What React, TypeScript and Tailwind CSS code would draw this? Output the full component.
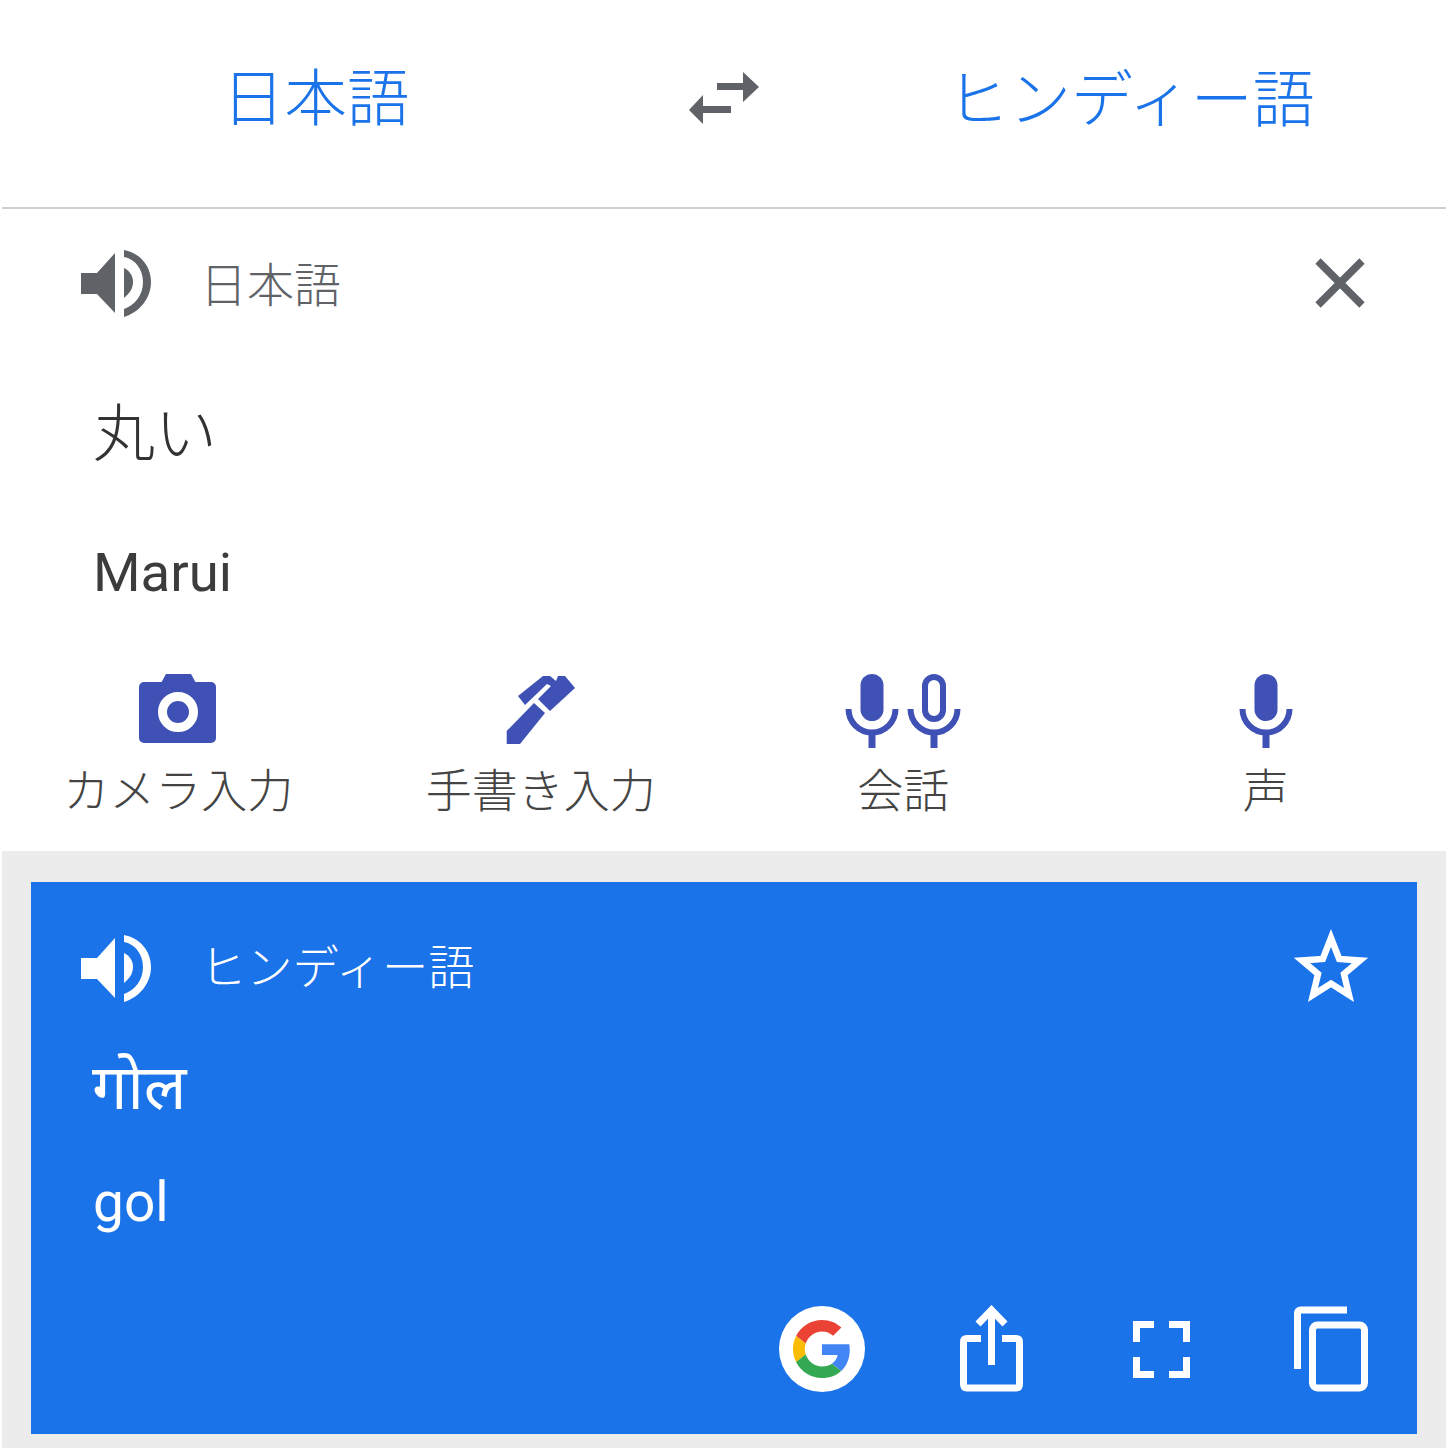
const cjk = "font-['Noto_Sans_CJK_JP','Noto_Sans',sans-serif]";

function Speaker({ color }: { color: string }) {
  return (
    <svg width="72" height="70" viewBox="0 0 72 70" fill={color} className="shrink-0">
      <path d="M1 25H17L35 5V65L17 46H1Z" />
      <path d="M44 20C50 23 53 28 53 34C53 40 50 45 44 50Z" />
      <path d="M44 2C60 5 71 18 71 34C71 50 60 64 44 69V61C55 57 63 47 63 34C63 21 55 11 44 9Z" />
    </svg>
  );
}

function Camera() {
  return (
    <svg width="78" height="70" viewBox="0 0 78 70">
      <path d="M22 9L27 0H52L57 9Z" fill="#3f51b5" />
      <rect x="0" y="8" width="77" height="61" rx="5" fill="#3f51b5" />
      <circle cx="39" cy="38" r="15.5" fill="none" stroke="#fff" strokeWidth="9" />
    </svg>
  );
}

function Pen() {
  return (
    <svg width="72" height="72" viewBox="0 0 72 72" fill="#3f51b5">
      <path d="M1.7 57V70H15L40 39L29 29Z" />
      <path d="M13 22L38 2H45L51 7L53 2H60L70 14L45 37L33 25L46 12L42 10L20 31Z" />
    </svg>
  );
}

function Mic({ outline }: { outline?: boolean }) {
  return (
    <svg width="54" height="75" viewBox="0 0 54 75" fill="none" stroke="#3f51b5">
      {outline ? (
        <rect x="18" y="3" width="18" height="42" rx="9" strokeWidth="6" />
      ) : (
        <rect x="15.5" y="0" width="23" height="47" rx="11.5" fill="#3f51b5" stroke="none" />
      )}
      <path d="M3.5 35A23.5 23.5 0 0 0 50.5 35" strokeWidth="6" />
      <path d="M27 58V74" strokeWidth="7" />
    </svg>
  );
}

function Tool({ icon, label }: { icon: React.ReactNode; label: string }) {
  return (
    <div className="flex flex-col items-center">
      <div className="flex h-[75px] items-start gap-[8px]">{icon}</div>
      <div className={`mt-[8px] h-[60px] text-[46px] leading-[60px] font-light whitespace-nowrap text-[#444444] ${cjk}`}>{label}</div>
    </div>
  );
}

function GoogleG() {
  return (
    <div className="flex h-[86px] w-[86px] items-center justify-center rounded-full bg-white">
      <svg width="58" height="58" viewBox="0 0 48 48">
        <path fill="#EA4335" d="M24 9.5c3.54 0 6.71 1.22 9.21 3.6l6.85-6.85C35.9 2.38 30.47 0 24 0 14.62 0 6.51 5.38 2.56 13.22l7.98 6.19C12.43 13.72 17.74 9.5 24 9.5z" />
        <path fill="#4285F4" d="M46.98 24.55c0-1.57-.15-3.09-.38-4.55H24v9.02h12.94c-.58 2.96-2.26 5.48-4.78 7.18l7.73 6c4.51-4.18 7.09-10.36 7.09-17.65z" />
        <path fill="#FBBC05" d="M10.53 28.59c-.48-1.45-.76-2.99-.76-4.59s.27-3.14.76-4.59l-7.98-6.19C.92 16.46 0 20.12 0 24c0 3.88.92 7.54 2.56 10.78l7.97-6.19z" />
        <path fill="#34A853" d="M24 48c6.48 0 11.93-2.13 15.89-5.81l-7.73-6c-2.15 1.45-4.92 2.3-8.16 2.3-6.26 0-11.57-4.22-13.47-9.91l-7.98 6.19C6.51 42.62 14.62 48 24 48z" />
      </svg>
    </div>
  );
}

function Share() {
  return (
    <svg width="66" height="88" viewBox="0 0 66 88" fill="none" stroke="#fff" className="ml-[94px]">
      <path d="M22 33.5H8Q4.5 33.5 4.5 37V79Q4.5 83 8 83H57Q60.5 83 60.5 79V37Q60.5 33.5 57 33.5H43" strokeWidth="7" />
      <path d="M32.5 8V60" strokeWidth="7" />
      <path d="M19 19L32.5 5L46 19" strokeWidth="7" />
    </svg>
  );
}

function Fullscreen() {
  return (
    <svg width="57" height="57" viewBox="0 0 57 57" fill="none" stroke="#fff" strokeWidth="7" className="ml-[108px]">
      <path d="M3.5 21V3.5H21" />
      <path d="M36 3.5H53.5V21" />
      <path d="M3.5 36V53.5H21" />
      <path d="M36 53.5H53.5V36" />
    </svg>
  );
}

function Copy() {
  return (
    <svg width="78" height="88" viewBox="0 0 78 88" fill="none" stroke="#fff" strokeWidth="7" className="ml-[102px]">
      <path d="M5.5 64V9Q5.5 5 9 5H55" />
      <rect x="20.5" y="20" width="52" height="63" rx="5" />
    </svg>
  );
}

export default function App() {
  return (
    <div className={`h-[1448px] w-[1448px] overflow-hidden bg-white px-[2px] ${cjk}`}>
      <header className="flex h-[209px] items-center border-b-2 border-[#cfcfcf] pb-[12px] pl-[220px]">
        <span className={`mb-[6px] w-[467px] text-[62.5px] leading-none font-light text-[#1a73e8] ${cjk}`}>日本語</span>
        <svg width="70" height="52" viewBox="0 0 70 52" fill="#5f6368">
          <path d="M28 11H54V0L70 15L54 30V18H28Z" />
          <path d="M0 38L14 23V34H42V41H14V52Z" />
        </svg>
        <span className={`mb-[6px] ml-[188px] text-[62px] leading-none font-light whitespace-nowrap text-[#1a73e8] ${cjk}`}>ヒンディー語</span>
      </header>

      <section className="h-[642px] pt-[39px]">
        <div className="flex h-[70px] items-center pr-[78px] pl-[78px]">
          <Speaker color="#5f6368" />
          <span className={`mb-[4px] ml-[48px] text-[47px] leading-none font-light text-[#5f6368] ${cjk}`}>日本語</span>
          <svg width="56" height="56" viewBox="0 0 56 56" fill="none" stroke="#5f6368" strokeWidth="7.5" className="ml-auto">
            <path d="M6 6L50 50M50 6L6 50" />
          </svg>
        </div>
        <div className={`mt-[81px] ml-[91px] h-[60px] text-[62px] leading-[60px] font-light text-[#333333] ${cjk}`}>丸い</div>
        <div className="mt-[83px] ml-[91px] h-[60px] font-['Roboto',sans-serif] text-[54.5px] leading-[60px] text-[#3c3c3c]">Marui</div>
        <div className="mt-[72px] -ml-[5px] grid w-[1450px] grid-cols-4">
          <Tool icon={<Camera />} label="カメラ入力" />
          <Tool icon={<Pen />} label="手書き入力" />
          <Tool icon={<><Mic /><Mic outline /></>} label="会話" />
          <Tool icon={<Mic />} label="声" />
        </div>
      </section>

      <section className="h-[597px] bg-[#ececec] px-[29px] pt-[31px]">
        <div className="h-[552px] bg-[#1b73e9] pt-[51px] text-white">
          <div className="flex h-[70px] items-center pr-[46px] pl-[49px]">
            <Speaker color="#ffffff" />
            <span className={`mb-[8px] ml-[48px] text-[46.3px] leading-none font-light whitespace-nowrap ${cjk}`}>ヒンディー語</span>
            <svg width="80" height="80" viewBox="0 0 80 80" fill="none" stroke="#fff" strokeWidth="6.5" className="ml-auto -translate-y-[1px]">
              <path d="M40 11L48.2 32L69 33.5L53 47L58 68L40 56.5L22 68L27 47L11 33.5L31.8 32Z" />
            </svg>
          </div>
          <div className="mt-[61px] ml-[61px] h-[60px] font-['Noto_Sans_Devanagari','Noto_Sans','Lohit_Devanagari',sans-serif] text-[63px] leading-[60px]">गोल</div>
          <div className="mt-[48px] ml-[62px] h-[60px] font-['Roboto',sans-serif] text-[55px] leading-[60px]">gol</div>
          <div className="mt-[73px] flex h-[88px] items-center justify-end pr-[47px]">
            <GoogleG />
            <Share />
            <Fullscreen />
            <Copy />
          </div>
        </div>
      </section>
    </div>
  );
}
